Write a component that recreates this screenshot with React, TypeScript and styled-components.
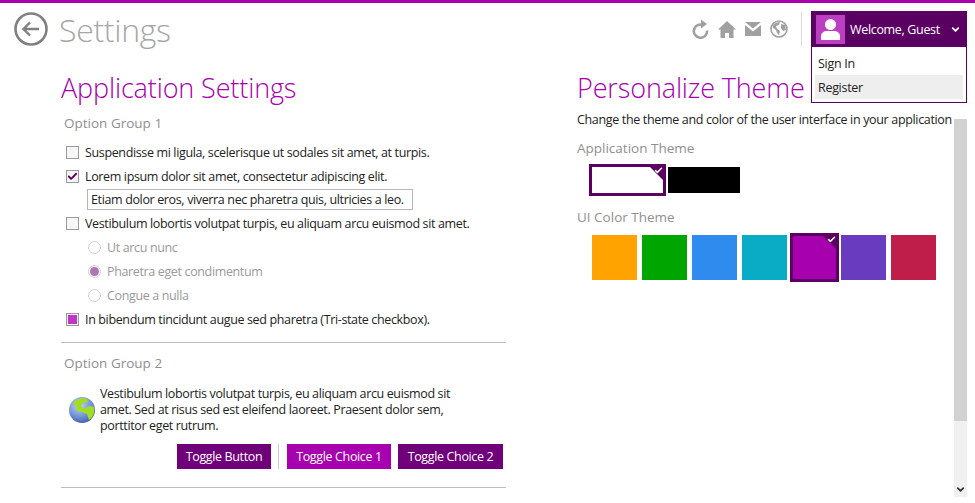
import React from "react";
import styled, { createGlobalStyle } from "styled-components";
import { Check, ChevronDown } from "lucide-react";

const Global = createGlobalStyle`
  html, body { margin: 0; padding: 0; height: 100%; background: #fff; overflow: hidden; }
  body { font-family: "Open Sans", "Noto Sans", sans-serif; color: #222; }
`;

const Page = styled.div`
  width: 975px; height: 503px; position: relative; overflow: hidden;
  border-top: 3px solid #a700ae; box-sizing: border-box;
`;
const Header = styled.header`
  height: 65px; display: flex; align-items: flex-start; padding: 9px 8px 0 14px; box-sizing: border-box;
`;
const BackButton = styled.div`
  width: 34px; height: 34px; display: flex;
`;
const PageTitle = styled.h1`
  margin: -5px 0 0 11px; font-size: 32px; line-height: 46px; font-weight: 300; letter-spacing: -0.3px; color: #a6a6a6; flex: 1;
`;
const Tools = styled.div`
  display: flex; align-items: center; gap: 9px; height: 34px; padding-right: 13px; margin-right: 9px;
  border-right: 1px solid #d8d8d8;
`;
const User = styled.div`
  width: 156px; height: 36px; margin-top: -1px; background: #5b0063; display: flex; align-items: center;
  box-sizing: border-box; padding: 3px 6px 3px 5px; color: #fff; position: relative;
`;
const Avatar = styled.div`
  width: 29px; height: 29px; background: #bc3fc1; display: flex; align-items: center; justify-content: center;
`;
const Welcome = styled.span`
  font-size: 12.5px; letter-spacing: -0.33px; margin-left: 5px; flex: 1;
`;
const Menu = styled.div`
  position: absolute; right: 0; top: 36px; width: 156px; height: 56px; background: #fff; box-sizing: border-box;
  border: 1px solid #5b0063; border-top: 0; padding: 4px 3px;
`;
const MenuItem = styled.div<{ $hot?: boolean }>`
  height: 24px; line-height: 25px; padding-left: 3px; font-size: 12.5px; letter-spacing: -0.3px; color: #222;
  background: ${p => (p.$hot ? "#eeeeee" : "transparent")};
`;
const Content = styled.main`
  display: flex; padding-left: 61px; height: 429px;
`;
const LeftCol = styled.section`
  width: 445px; flex: none;
`;
const RightCol = styled.section`
  width: 377px; margin-left: 71px; flex: none; overflow: hidden; white-space: nowrap;
`;
const Heading = styled.h2`
  margin: 0; font-size: 27px; line-height: 40px; font-weight: 300; letter-spacing: -0.13px; color: #a700ae;
`;
const GroupTitle = styled.h3<{ $second?: boolean }>`
  margin: ${p => (p.$second ? "10px" : "5px")} 0 0 3px; font-size: 13.5px; line-height: 20px; font-weight: 400; color: #8f8f8f;
`;
const Options = styled.div`
  display: flex; flex-direction: column; margin-top: 7px;
`;
const Row = styled.label<{ $muted?: boolean; $indent?: boolean }>`
  display: flex; align-items: center; height: 24px; font-size: 12.5px; letter-spacing: -0.36px;
  padding-left: ${p => (p.$indent ? "27px" : "5px")};
  color: ${p => (p.$muted ? "#9a9a9a" : "#222")};
  white-space: nowrap;
`;
const Box = styled.span`
  width: 11px; height: 11px; border: 1px solid #9a9a9a; background: #f6f6f6; margin-right: 6px;
  display: flex; align-items: center; justify-content: center; flex: none;
`;
const TriMark = styled.span`
  width: 9px; height: 9px; background: #c236c6;
`;
const Radio = styled.span`
  width: 11px; height: 11px; border: 1px solid #d0d0d0; border-radius: 50%; margin-right: 6px;
  display: flex; align-items: center; justify-content: center; flex: none;
`;
const RadioDot = styled.span`
  width: 9px; height: 9px; border-radius: 50%; background: #b075b4;
`;
const TextField = styled.div`
  margin: 1px 0 1px 26px; width: 326px; height: 21px; line-height: 19px; padding-left: 3px; font-size: 12.5px; letter-spacing: -0.36px;
  border: 1px solid #b5b5b5; box-sizing: border-box; white-space: nowrap; overflow: hidden;
`;
const Rule = styled.hr<{ $gap: number }>`
  margin: ${p => p.$gap}px 0 0; border: 0; border-top: 1px solid #bdbdbd;
`;
const Info = styled.div`
  display: flex; align-items: center; margin: 13px 0 0 7px;
`;
const InfoText = styled.p`
  margin: 0 0 0 4px; width: 360px; font-size: 12.5px; letter-spacing: -0.36px; line-height: 16px; color: #222;
`;
const Actions = styled.div`
  display: flex; justify-content: flex-end; align-items: stretch; margin: 10px 3px 0 0; gap: 7px;
`;
const Toggle = styled.button<{ $on?: boolean; $w: number }>`
  height: 25px; border: 0; padding: 0; font: inherit; font-size: 12.5px; letter-spacing: -0.36px; color: #fff;
  width: ${p => p.$w}px;
  background: ${p => (p.$on ? "#a700ae" : "#6f007a")};
`;
const Split = styled.span`
  width: 1px; background: #c9c9c9; margin: 0 1px 0 0;
`;
const Intro = styled.p`
  margin: 3px 0 0; font-size: 12.5px; letter-spacing: -0.34px; line-height: 18px; color: #222;
`;
const ThemeLabel = styled.h3`
  margin: 9px 0 0; font-size: 13.5px; line-height: 20px; font-weight: 400; color: #8f8f8f;
`;
const Swatches = styled.div`
  display: flex; align-items: center; margin: 6px 0 0 12px; gap: 2px; height: 32px;
`;
const AppSwatch = styled.div<{ $color: string; $sel?: boolean }>`
  position: relative; width: ${p => (p.$sel ? "77px" : "72px")}; height: ${p => (p.$sel ? "32px" : "26px")};
  background: ${p => p.$color}; box-sizing: border-box; ${p => p.$sel && "border: 3px solid #5b0063;"}
`;
const ColorLabel = styled(ThemeLabel)`
  margin-top: 11px;
`;
const ColorRow = styled.div`
  display: flex; align-items: center; margin: 6px 0 0 15px; gap: 5px; height: 49px;
`;
const ColorSwatch = styled.div<{ $color: string; $sel?: boolean }>`
  position: relative; box-sizing: border-box; background: ${p => p.$color};
  width: ${p => (p.$sel ? "49px" : "45px")}; height: ${p => (p.$sel ? "49px" : "45px")};
  ${p => p.$sel && "border: 3px solid #5b0063; margin: 0 -3px 0 -2px;"}
`;
const Corner = styled.span`
  position: absolute; top: 0; right: 0; width: 0; height: 0;
  border-top: 13px solid #5b0063; border-left: 13px solid transparent;
`;
const CornerCheck = styled(Check)`
  position: absolute; top: -1px; right: 0;
`;
const Scrollbar = styled.div`
  position: absolute; left: 954px; top: 116px; width: 13px; height: 378px; background: #f0f0f0;
`;
const Thumb = styled.div`
  height: 302px; background: #d2d2d2;
`;
const ScrollArrow = styled(ChevronDown)`
  position: absolute; left: 1px; bottom: 2px;
`;

const Selected = () => (
  <>
    <Corner />
    <CornerCheck size={9} strokeWidth={4} color="#fff" />
  </>
);

const Earth = () => (
  <svg width="28" height="28" viewBox="0 0 28 28">
    <defs>
      <radialGradient id="sea" cx="0.4" cy="0.3" r="0.8">
        <stop offset="0" stopColor="#c3d6f2" />
        <stop offset="0.6" stopColor="#6d8fd4" />
        <stop offset="1" stopColor="#3b4f9a" />
      </radialGradient>
    </defs>
    <circle cx="14" cy="14" r="13" fill="url(#sea)" />
    <path d="M6 6c3-3 9-5 13-3l1 3-5 1-2 3 3 3 6-3 4 1 0 4c0 4-2 7-5 9l-2-6-5-2-5-1-1-5-3-2z" fill="#a2de1e" />
  </svg>
);

const colors = ["#ffa300", "#00a500", "#2f8cee", "#0aabc5", "#a700ae", "#693cbf", "#bf1e4b"];

export default function App() {
  return (
    <Page>
      <Global />
      <Header>
        <BackButton>
          <svg width="34" height="34" viewBox="0 0 34 34" fill="none" stroke="#808080">
            <circle cx="17" cy="17" r="15.5" strokeWidth="2.6" />
            <path d="M25 17H10M16 10.5 9.5 17l6.5 6.5" strokeWidth="2.4" />
          </svg>
        </BackButton>
        <PageTitle>Settings</PageTitle>
        <Tools>
          <svg width="17" height="20" viewBox="0 0 17 20" fill="none" stroke="#a0a0a0">
            <path d="M11.5 6.3A6.6 6.6 0 1 0 15 11.5" strokeWidth="2.6" />
            <path d="M9 0.5v9l6-4.500z" fill="#a0a0a0" stroke="none" />
          </svg>
          <svg width="18" height="17" viewBox="0 0 18 17" fill="#a0a0a0">
            <path d="M9 0 18 8.500h-2.500V17H11v-5H7v5H2.500V8.500H0z" />
          </svg>
          <svg width="16" height="14" viewBox="0 0 16 14" fill="#a0a0a0">
            <path d="M0 0h16L8 6.500z" />
            <path d="M0 3l8 6.500L16 3v11H0z" />
          </svg>
          <svg width="18" height="18" viewBox="0 0 18 18">
            <circle cx="9" cy="9" r="8" fill="#fff" stroke="#a0a0a0" strokeWidth="1.6" />
            <path d="M3 5c2-2 5-3 7-3l-1 3-3 1 1 3 3 2-1 4-2-2-1-3-3-2zM11 4l4 1 1 5-3 1-2-3z" fill="#a0a0a0" />
          </svg>
        </Tools>
        <User>
          <Avatar>
            <svg width="21" height="23" viewBox="0 0 21 23" fill="#fff">
              <circle cx="10.500" cy="6.500" r="5.500" />
              <path d="M1 22v-4c0-3 3-5 6-5h7c3 0 6 2 6 5v4z" />
            </svg>
          </Avatar>
          <Welcome>Welcome, Guest</Welcome>
          <ChevronDown size={11} strokeWidth={4} />
          <Menu>
            <MenuItem>Sign In</MenuItem>
            <MenuItem $hot>Register</MenuItem>
          </Menu>
        </User>
      </Header>
      <Content>
        <LeftCol>
          <Heading>Application Settings</Heading>
          <GroupTitle>Option Group 1</GroupTitle>
          <Options>
            <Row><Box />Suspendisse mi ligula, scelerisque ut sodales sit amet, at turpis.</Row>
            <Row><Box><Check size={11} strokeWidth={4} color="#5b0063" /></Box>Lorem ipsum dolor sit amet, consectetur adipiscing elit.</Row>
            <TextField>Etiam dolor eros, viverra nec pharetra quis, ultricies a leo.</TextField>
            <Row><Box />Vestibulum lobortis volutpat turpis, eu aliquam arcu euismod sit amet.</Row>
            <Row $muted $indent><Radio />Ut arcu nunc</Row>
            <Row $muted $indent><Radio><RadioDot /></Radio>Pharetra eget condimentum</Row>
            <Row $muted $indent><Radio />Congue a nulla</Row>
            <Row><Box><TriMark /></Box>In bibendum tincidunt augue sed pharetra (Tri-state checkbox).</Row>
          </Options>
          <Rule $gap={11} />
          <GroupTitle $second>Option Group 2</GroupTitle>
          <Info>
            <Earth />
            <InfoText>Vestibulum lobortis volutpat turpis, eu aliquam arcu euismod sit amet. Sed at risus sed est eleifend laoreet. Praesent dolor sem, porttitor eget rutrum.</InfoText>
          </Info>
          <Actions>
            <Toggle $w={94}>Toggle Button</Toggle>
            <Split />
            <Toggle $on $w={104}>Toggle Choice 1</Toggle>
            <Toggle $w={105}>Toggle Choice 2</Toggle>
          </Actions>
          <Rule $gap={18} />
        </LeftCol>
        <RightCol>
          <Heading>Personalize Theme</Heading>
          <Intro>Change the theme and color of the user interface in your application</Intro>
          <ThemeLabel>Application Theme</ThemeLabel>
          <Swatches>
            <AppSwatch $color="#fff" $sel><Selected /></AppSwatch>
            <AppSwatch $color="#000" />
          </Swatches>
          <ColorLabel>UI Color Theme</ColorLabel>
          <ColorRow>
            {colors.map((c, i) => (
              <ColorSwatch key={c} $color={c} $sel={i === 4}>{i === 4 && <Selected />}</ColorSwatch>
            ))}
          </ColorRow>
        </RightCol>
      </Content>
      <Scrollbar>
        <Thumb />
        <ScrollArrow size={11} strokeWidth={4} color="#333" />
      </Scrollbar>
    </Page>
  );
}
